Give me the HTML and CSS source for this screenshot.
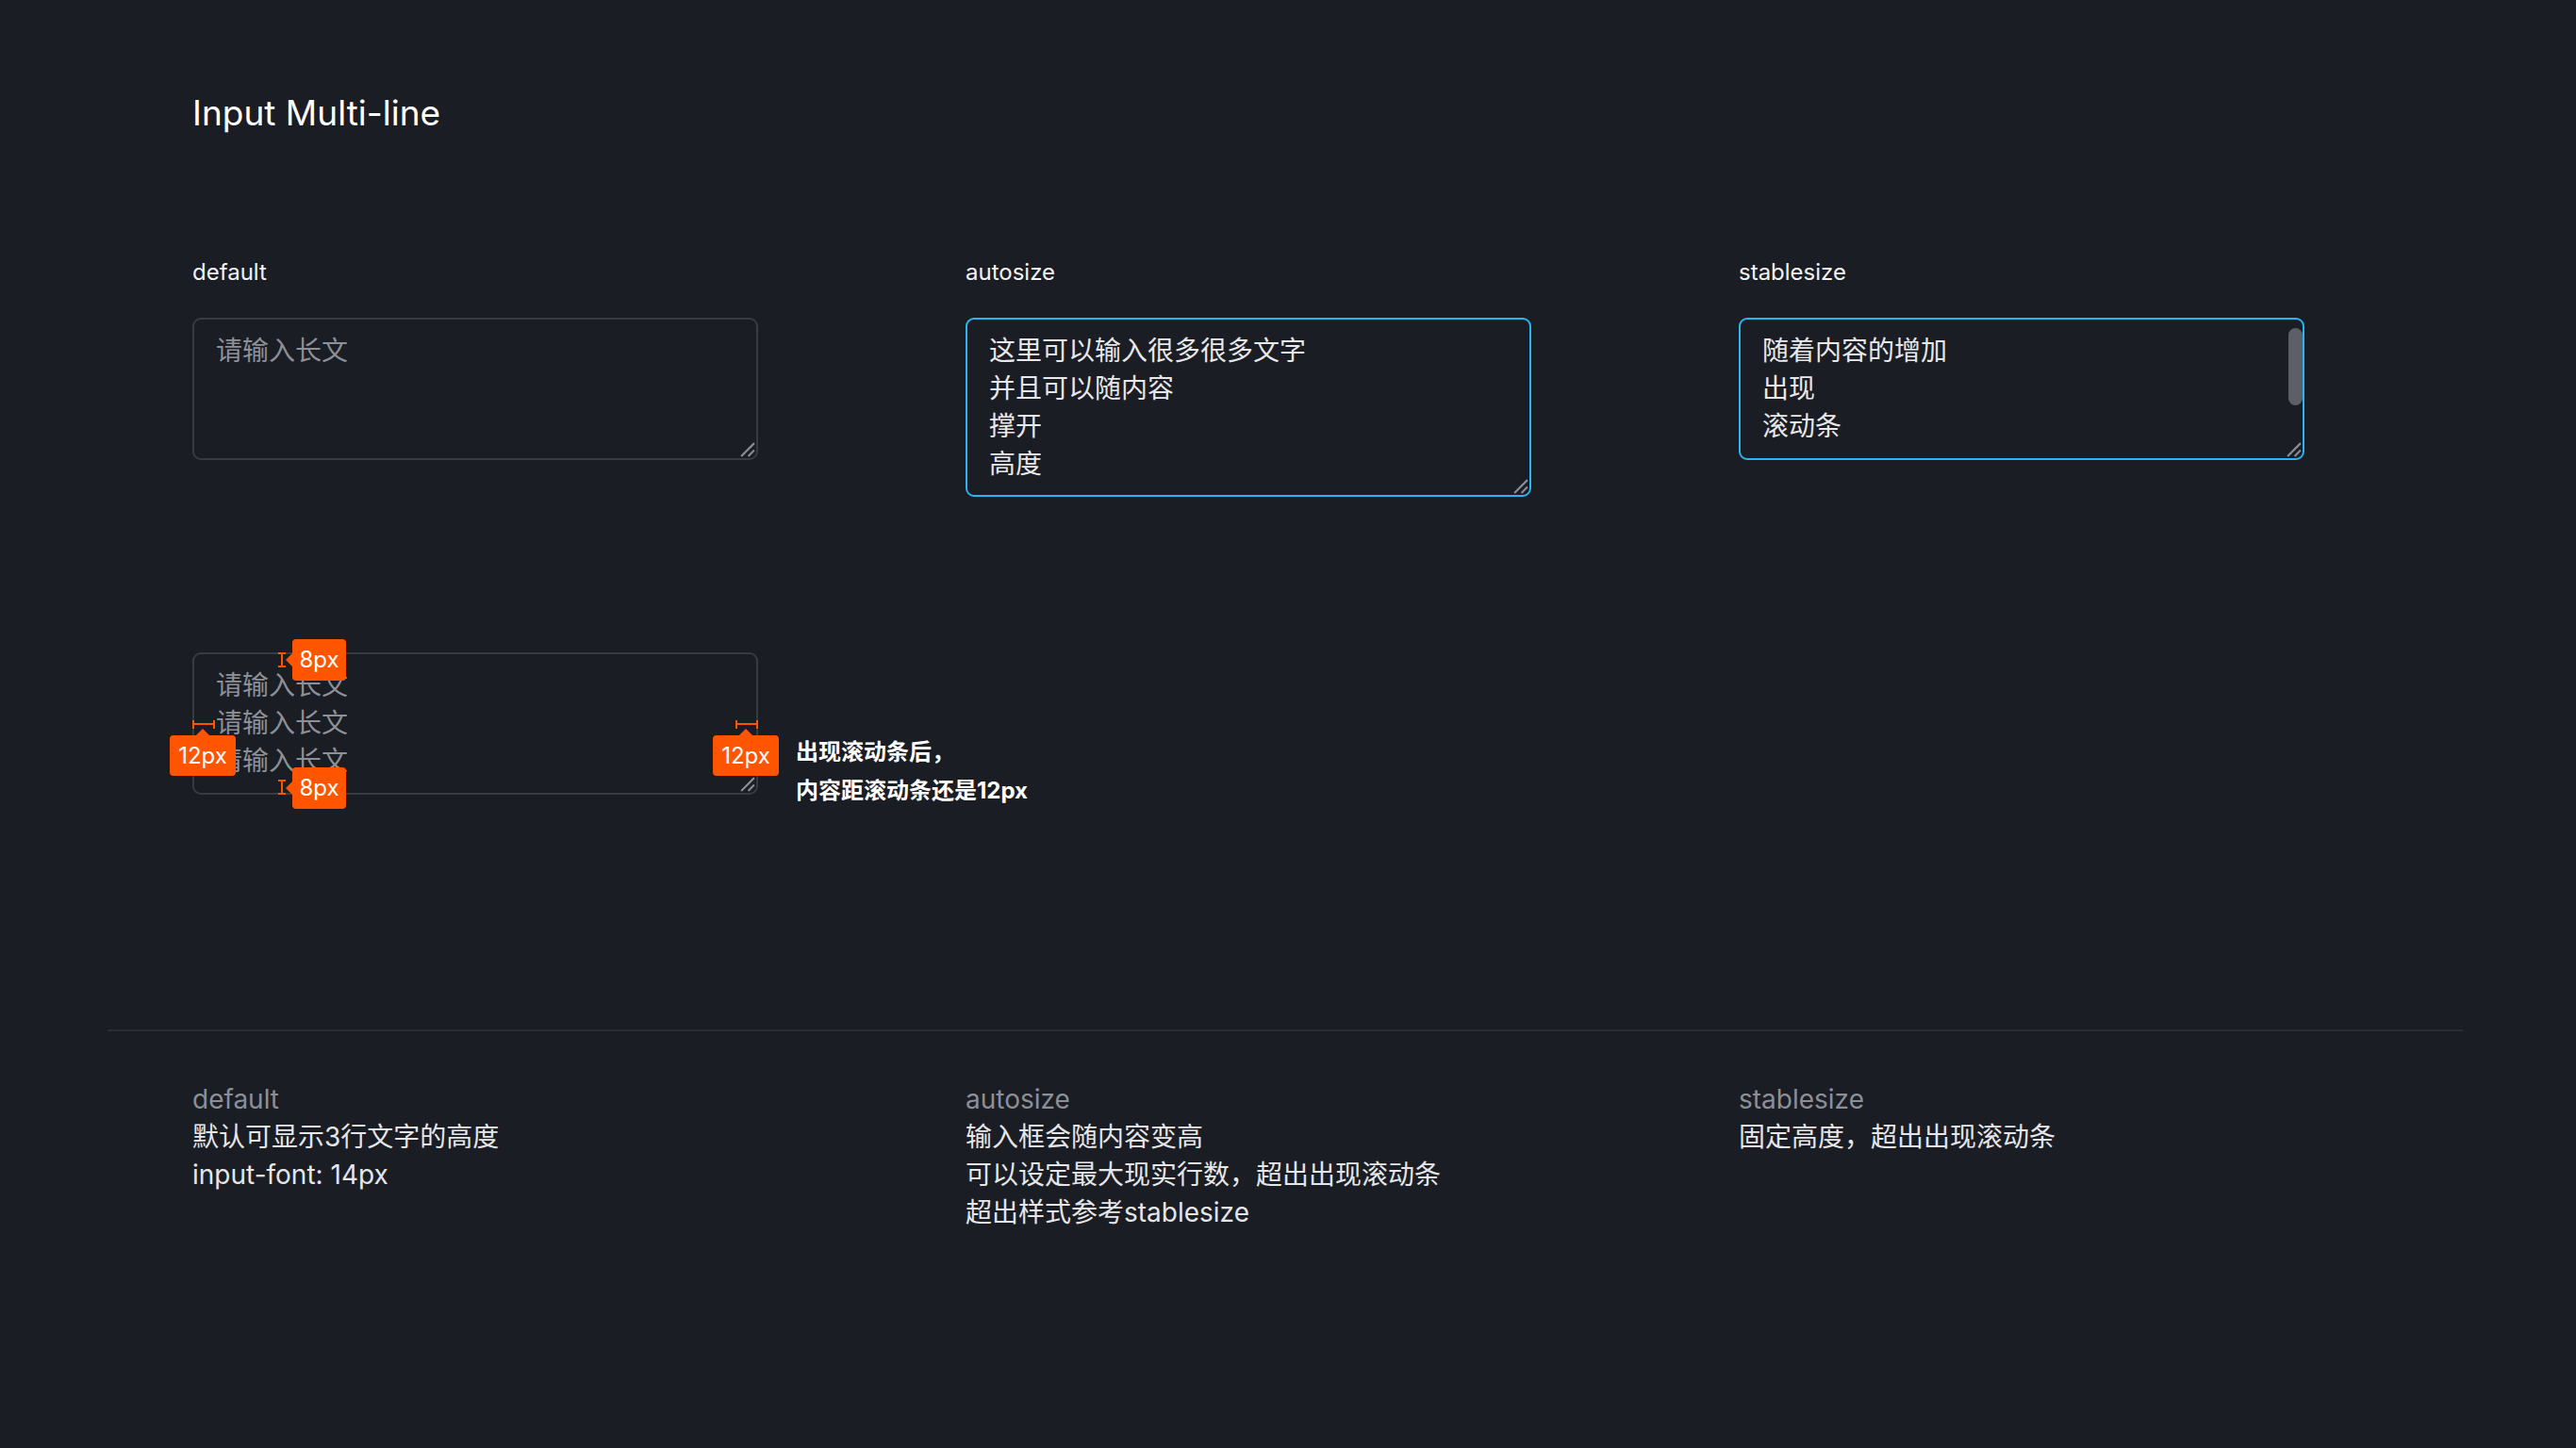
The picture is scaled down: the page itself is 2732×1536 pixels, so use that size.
FILE: index.html
```html
<!DOCTYPE html>
<html lang="zh-CN">
<head>
<meta charset="utf-8">
<title>Input Multi-line</title>
<link rel="stylesheet" href="styles.css">
</head>
<body>
<div class="page">
  <h1 class="title">Input Multi-line</h1>

  <div class="demo-grid">
    <div class="demo">
      <div class="label">default</div>
      <div class="field field-default">
        <div class="placeholder">请输入长文</div>
        <svg class="grip" viewBox="0 0 16 16"><path d="M2 15 L15 2 M9 15 L15 9" /></svg>
      </div>
    </div>
    <div class="demo">
      <div class="label">autosize</div>
      <div class="field field-active field-auto">
        <div class="value">这里可以输入很多很多文字</div>
        <div class="value">并且可以随内容</div>
        <div class="value">撑开</div>
        <div class="value">高度</div>
        <svg class="grip" viewBox="0 0 16 16"><path d="M2 15 L15 2 M9 15 L15 9" /></svg>
      </div>
    </div>
    <div class="demo">
      <div class="label">stablesize</div>
      <div class="field field-active field-stable">
        <div class="value">随着内容的增加</div>
        <div class="value">出现</div>
        <div class="value">滚动条</div>
        <div class="thumb"></div>
        <svg class="grip" viewBox="0 0 16 16"><path d="M2 15 L15 2 M9 15 L15 9" /></svg>
      </div>
    </div>
  </div>

  <div class="spec-row">
    <div class="field field-default field-spec">
      <div class="placeholder">请输入长文</div>
      <div class="placeholder">请输入长文</div>
      <div class="placeholder">请输入长文</div>
      <svg class="grip" viewBox="0 0 16 16"><path d="M2 15 L15 2 M9 15 L15 9" /></svg>

      <span class="ibeam ibeam-top"></span>
      <span class="tag tag-left-arrow tag-top">8px</span>
      <span class="ibeam ibeam-bottom"></span>
      <span class="tag tag-left-arrow tag-bottom">8px</span>
      <span class="hbeam hbeam-left"></span>
      <span class="tag tag-up-arrow tag-side-left">12px</span>
      <span class="hbeam hbeam-right"></span>
      <span class="tag tag-up-arrow tag-side-right">12px</span>
    </div>
    <div class="note">
      <div>出现滚动条后，</div>
      <div>内容距滚动条还是12px</div>
    </div>
  </div>

  <div class="divider"></div>

  <div class="desc-grid">
    <div class="desc">
      <div class="desc-head">default</div>
      <div class="desc-line">默认可显示3行文字的高度</div>
      <div class="desc-line">input-font: 14px</div>
    </div>
    <div class="desc">
      <div class="desc-head">autosize</div>
      <div class="desc-line">输入框会随内容变高</div>
      <div class="desc-line">可以设定最大现实行数，超出出现滚动条</div>
      <div class="desc-line">超出样式参考stablesize</div>
    </div>
    <div class="desc">
      <div class="desc-head">stablesize</div>
      <div class="desc-line">固定高度，超出出现滚动条</div>
    </div>
  </div>
</div>
</body>
</html>
```

FILE: styles.css
```css
* { box-sizing: border-box; }

html, body {
  margin: 0;
  background: #1b1d24;
}

body {
  width: 2732px;
  height: 1536px;
  overflow: hidden;
  font-family: Inter, "Noto Sans CJK SC", sans-serif;
  color: #e8e8ea;
}

.page {
  padding: 95px 0 0 204px;
}

.title {
  margin: 0;
  font-size: 37px;
  line-height: 50px;
  font-weight: 400;
  color: #ffffff;
}

.demo-grid {
  margin-top: 127px;
  display: grid;
  grid-template-columns: repeat(3, 600px);
  column-gap: 220px;
  align-items: start;
}

.label {
  font-size: 24px;
  line-height: 34px;
  color: #f2f2f4;
}

.field {
  position: relative;
  width: 600px;
  margin-top: 31px;
  border: 2px solid #383b42;
  border-radius: 9px;
  padding: 13px 24px 13px 23px;
  font-size: 28px;
  line-height: 40px;
  overflow: hidden;
}

.field-default { height: 151px; }
.field-auto { height: 190px; }
.field-stable { height: 151px; }

.field-active {
  border-color: #2ab4f0;
}

.placeholder { color: #8e9097; white-space: nowrap; }
.value { color: #e8e8ea; white-space: nowrap; }

.thumb {
  position: absolute;
  right: 0;
  top: 9px;
  width: 15px;
  height: 82px;
  border-radius: 8px;
  background: #5c5f67;
}

.grip {
  position: absolute;
  right: 1px;
  bottom: 1px;
  width: 17px;
  height: 17px;
}
.grip path {
  stroke: #8a8d94;
  stroke-width: 2;
  fill: none;
}

/* spec / annotation row */
.spec-row {
  margin-top: 165px;
  display: flex;
  align-items: flex-start;
  column-gap: 40px;
}

.field-spec {
  margin-top: 0;
  overflow: visible;
}

.note {
  padding-top: 85px;
  font-size: 24px;
  line-height: 41px;
  font-weight: 700;
  color: #ffffff;
  white-space: nowrap;
}

.ibeam {
  position: absolute;
  left: 89px;
  width: 8px;
  height: 16px;
  border-top: 2px solid #ff5500;
  border-bottom: 2px solid #ff5500;
}
.ibeam::before {
  content: "";
  position: absolute;
  left: 3px;
  top: 0;
  bottom: 0;
  width: 2px;
  background: #ff5500;
}
.ibeam-top { top: -2px; }
.ibeam-bottom { bottom: -2px; }

.hbeam {
  position: absolute;
  top: 70px;
  width: 24px;
  height: 9px;
  border-left: 2px solid #ff5500;
  border-right: 2px solid #ff5500;
}
.hbeam::before {
  content: "";
  position: absolute;
  left: 0;
  right: 0;
  top: 3px;
  height: 2px;
  background: #ff5500;
}
.hbeam-left { left: -2px; }
.hbeam-right { right: -2px; }

.tag {
  position: absolute;
  display: flex;
  align-items: center;
  justify-content: center;
  height: 44px;
  border-radius: 4px;
  background: #ff5500;
  color: #ffffff;
  font-size: 24px;
  line-height: 1;
  z-index: 2;
}

.tag-left-arrow::before {
  content: "";
  position: absolute;
  left: -7px;
  top: 50%;
  margin-top: -7px;
  border-top: 7px solid transparent;
  border-bottom: 7px solid transparent;
  border-right: 7px solid #ff5500;
}

.tag-up-arrow::before {
  content: "";
  position: absolute;
  left: 50%;
  top: -7px;
  margin-left: -7px;
  border-left: 7px solid transparent;
  border-right: 7px solid transparent;
  border-bottom: 7px solid #ff5500;
}

.tag-top {
  left: 104px;
  top: -16px;
  width: 57px;
}
.tag-bottom {
  left: 104px;
  top: 120px;
  width: 57px;
}
.tag-side-left {
  left: -26px;
  top: 86px;
  width: 70px;
  height: 43px;
}
.tag-side-right {
  left: 550px;
  top: 86px;
  width: 70px;
  height: 43px;
}

.divider {
  margin-top: 233px;
  margin-left: -90px;
  width: 2498px;
  height: 2px;
  background: #2b2e35;
}

.desc-grid {
  margin-top: 52px;
  display: grid;
  grid-template-columns: repeat(3, 600px);
  column-gap: 220px;
  font-size: 28px;
  line-height: 40px;
}

.desc-head { color: #8d8f96; }
.desc-line { color: #e6e6e8; white-space: nowrap; }
```
